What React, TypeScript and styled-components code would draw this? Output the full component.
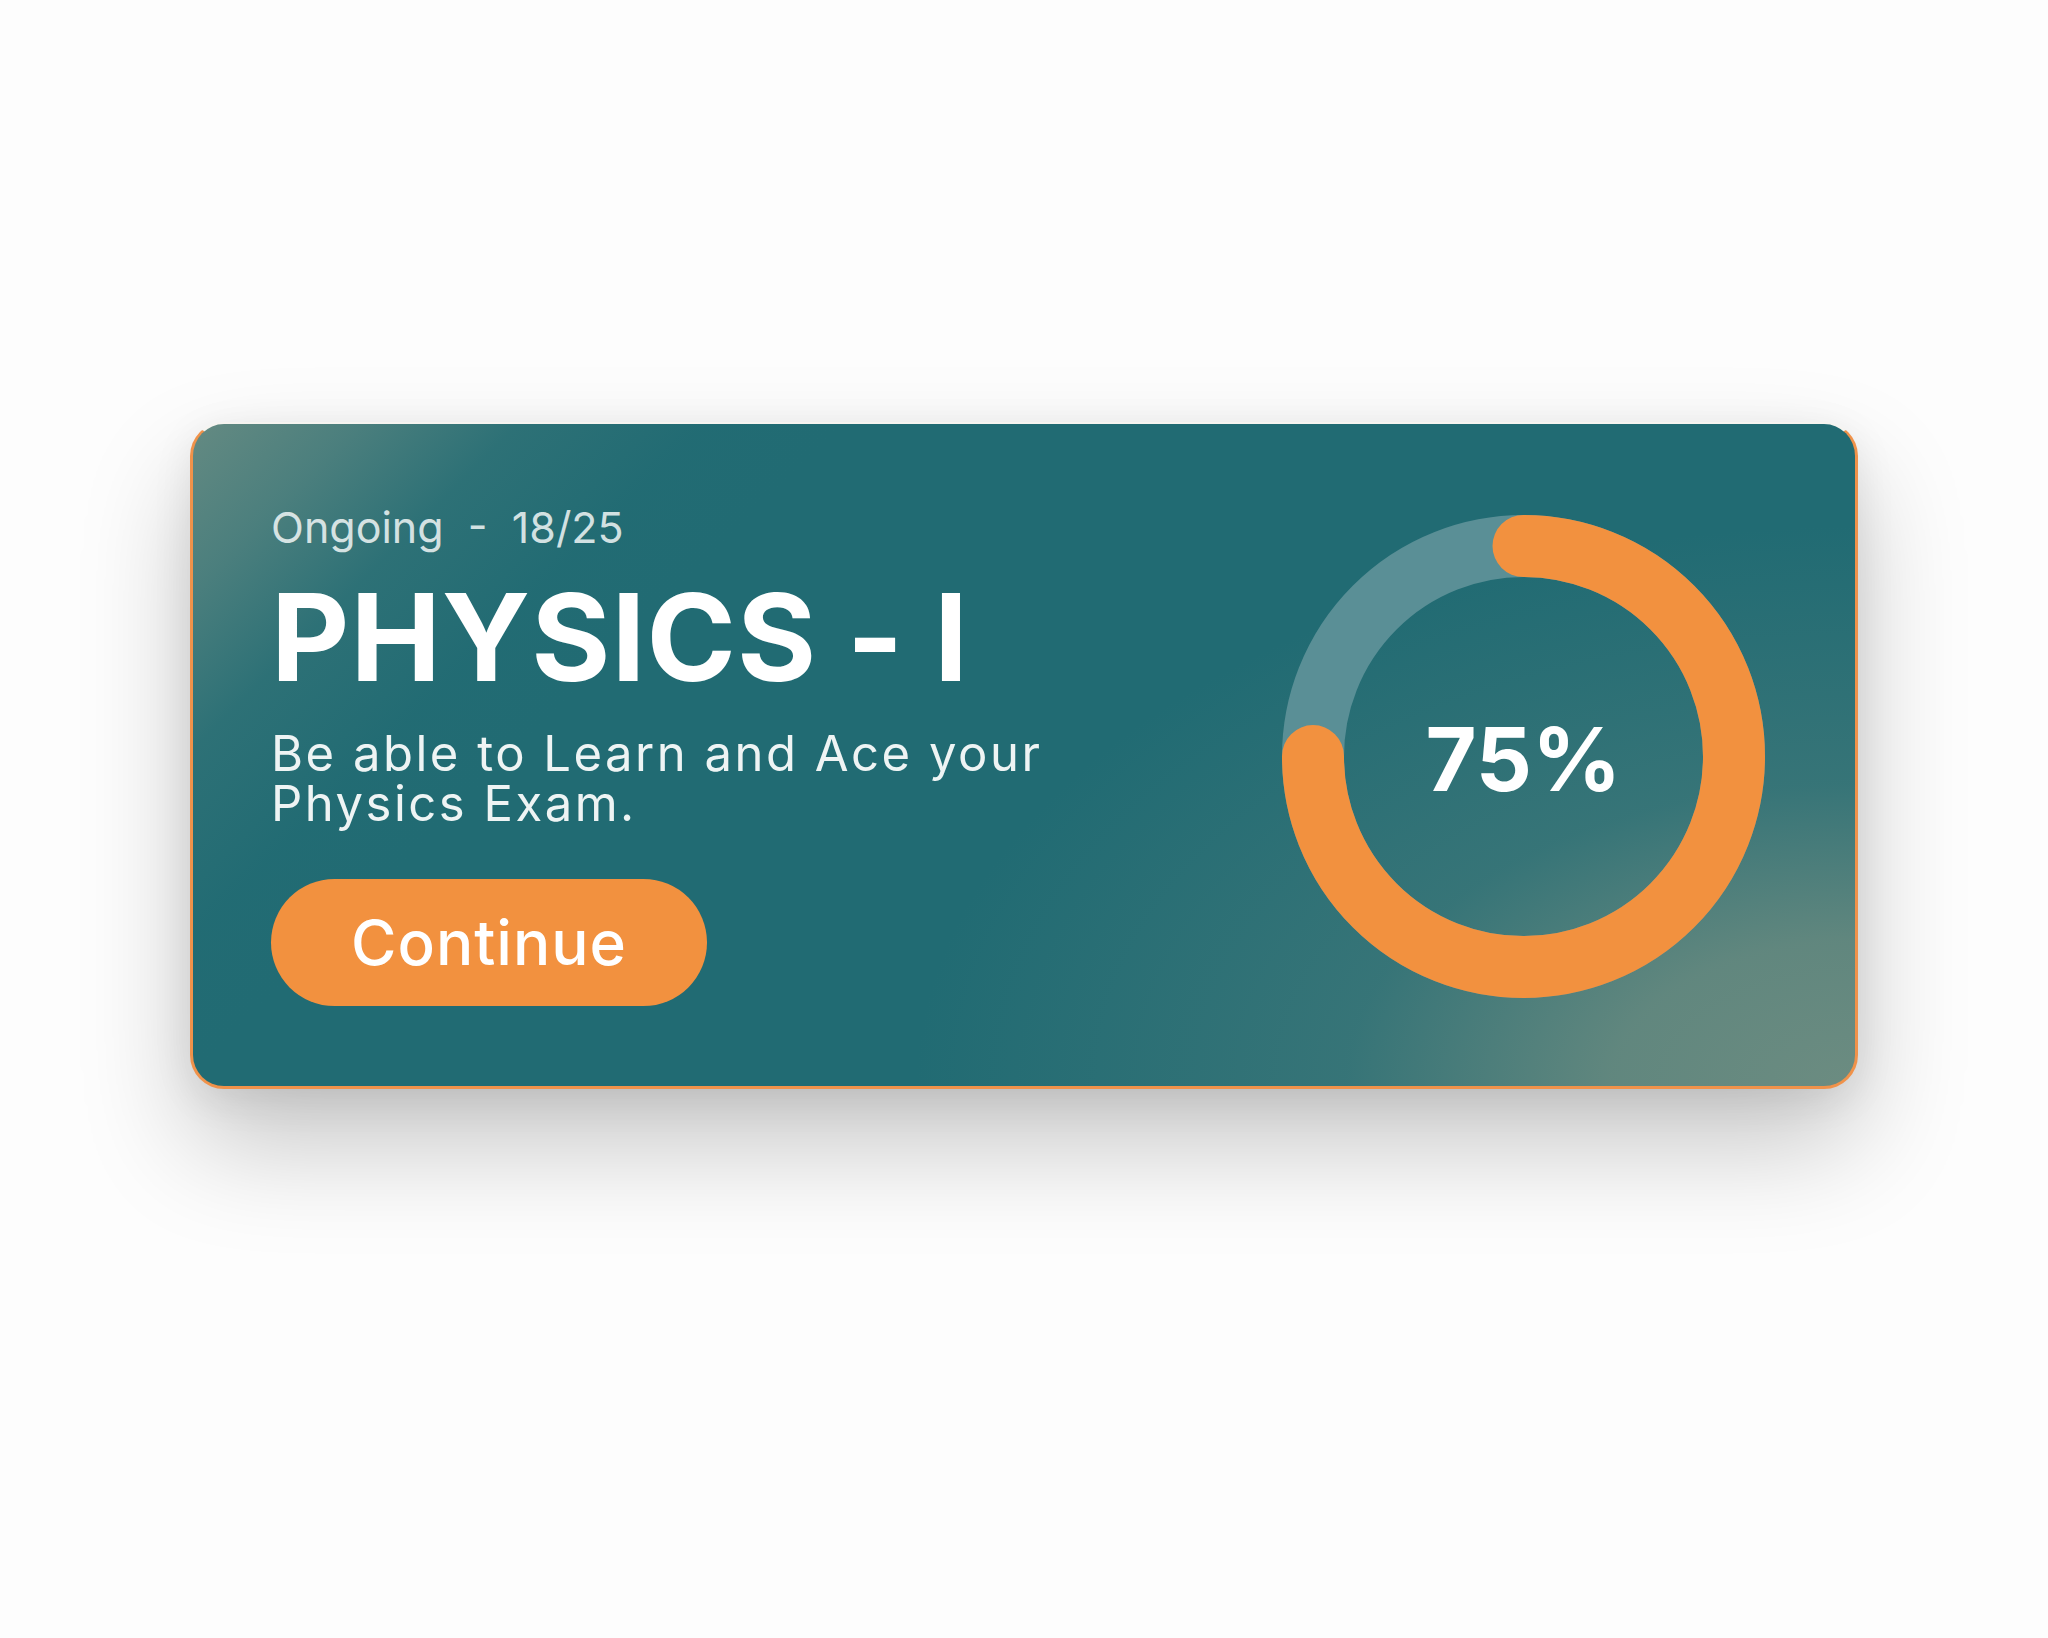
import React from "react";
import styled, { createGlobalStyle } from "styled-components";

const GlobalStyle = createGlobalStyle`
  html, body {
    margin: 0;
    padding: 0;
    background: #fdfdfd;
    font-family: Inter, "Noto Sans", "Liberation Sans", sans-serif;
  }
  * { box-sizing: border-box; }
`;

const Page = styled.main`
  width: 2048px;
  min-height: 1638px;
  display: flex;
  justify-content: center;
  align-items: flex-start;
  padding-top: 422px;
  background: #fdfdfd;
`;

const Card = styled.section`
  width: 1668px;
  display: flex;
  align-items: center;
  justify-content: space-between;
  padding: 82px 90px 80px 78px;
  border-radius: 34px;
  border: 3px solid #f0924a;
  border-top: 2px solid #f6f4f0;
  background:
    linear-gradient(
      135deg,
      rgba(100, 138, 130, 1) 0%,
      rgba(86, 132, 128, 0.8) 7%,
      rgba(60, 120, 122, 0.45) 14%,
      rgba(40, 110, 117, 0.15) 22%,
      rgba(33, 107, 115, 0) 28%
    ),
    radial-gradient(
      ellipse 940px 560px at 100% 100%,
      rgba(108, 140, 129, 1) 0%,
      rgba(102, 137, 127, 0.92) 26%,
      rgba(72, 124, 123, 0.55) 54%,
      rgba(33, 107, 115, 0) 100%
    ),
    #216b73;
  box-shadow: 0 55px 110px rgba(0, 0, 0, 0.22), 0 10px 40px rgba(0, 0, 0, 0.08);
`;

const Info = styled.div`
  display: flex;
  flex-direction: column;
  align-items: flex-start;
`;

const Status = styled.div`
  font-size: 43px;
  line-height: 43px;
  font-weight: 400;
  color: rgba(235, 242, 242, 0.88);
  white-space: pre;
`;

const Title = styled.h1`
  margin: 28px 0 0 0;
  font-size: 121px;
  line-height: 121px;
  font-weight: 700;
  color: #ffffff;
  letter-spacing: 1px;
  white-space: nowrap;
`;

const Description = styled.p`
  margin: 31px 0 0 0;
  max-width: 880px;
  font-size: 49px;
  line-height: 50px;
  font-weight: 400;
  letter-spacing: 2.5px;
  color: #eef4f4;
`;

const ContinueButton = styled.button`
  margin-top: 50px;
  width: 436px;
  height: 127px;
  border: none;
  border-radius: 64px;
  background: #f2913f;
  color: #ffffff;
  font-family: Inter, "Noto Sans", sans-serif;
  font-size: 62px;
  font-weight: 500;
  letter-spacing: 1px;
  display: inline-flex;
  align-items: center;
  justify-content: center;
  cursor: pointer;
`;

const RingWrap = styled.div`
  position: relative;
  width: 483px;
  height: 483px;
  flex: none;
`;

const RingLabel = styled.div`
  position: absolute;
  inset: 0;
  display: flex;
  align-items: center;
  justify-content: center;
  font-size: 88px;
  font-weight: 700;
  color: #ffffff;
  padding-top: 6px;
`;

const ProgressRing: React.FC<{ value: number }> = ({ value }) => {
  const size = 483;
  const stroke = 62;
  const r = (size - stroke) / 2;
  const c = 2 * Math.PI * r;
  return (
    <RingWrap>
      <svg width={size} height={size} viewBox={`0 0 ${size} ${size}`}>
        <circle
          cx={size / 2}
          cy={size / 2}
          r={r}
          fill="none"
          stroke="#5a8f96"
          strokeWidth={stroke}
        />
        <circle
          cx={size / 2}
          cy={size / 2}
          r={r}
          fill="none"
          stroke="#f2913f"
          strokeWidth={stroke}
          strokeLinecap="round"
          strokeDasharray={`${(c * value) / 100} ${c}`}
          transform={`rotate(-90 ${size / 2} ${size / 2})`}
        />
      </svg>
      <RingLabel>{value}%</RingLabel>
    </RingWrap>
  );
};

export default function App() {
  return (
    <>
      <GlobalStyle />
      <Page>
        <Card>
          <Info>
            <Status>{"Ongoing  -  18/25"}</Status>
            <Title>PHYSICS - I</Title>
            <Description>
              Be able to Learn and Ace your Physics Exam.
            </Description>
            <ContinueButton>Continue</ContinueButton>
          </Info>
          <ProgressRing value={75} />
        </Card>
      </Page>
    </>
  );
}
